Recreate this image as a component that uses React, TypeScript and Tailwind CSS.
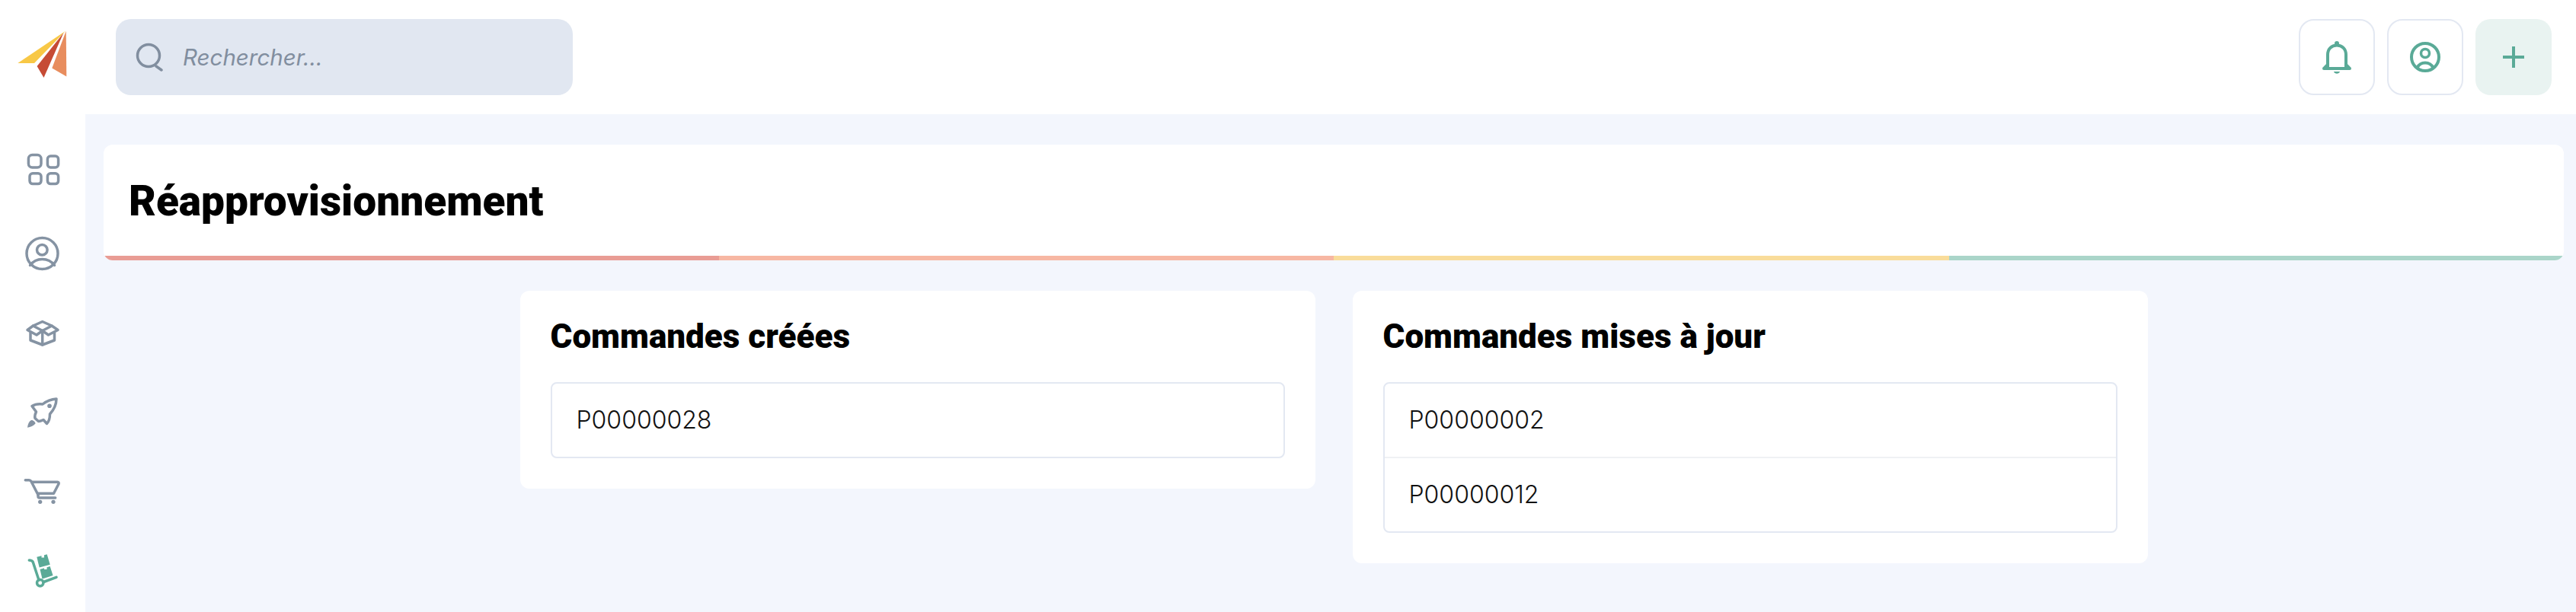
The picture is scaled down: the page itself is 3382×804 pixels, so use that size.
import React from "react";

const SLATE = "#8593a3";
const GREEN = "#5aaa97";

function Logo() {
  return (
    <svg width="112" height="150" viewBox="0 0 112 150" className="block">
      <polygon points="23.3,83 86,40.7 45,83" fill="#f8c846" />
      <polygon points="48.6,87 83.5,43 57.5,102" fill="#c64b35" />
      <polygon points="86.7,40.7 87.3,100.5 68.3,89.5" fill="#e88d5e" />
    </svg>
  );
}

function NavIcon({ children, color = SLATE }: { children: React.ReactNode; color?: string }) {
  return (
    <svg width="56" height="56" viewBox="0 0 56 56" fill="none" stroke={color} strokeWidth="3.5" strokeLinecap="round" strokeLinejoin="round">
      {children}
    </svg>
  );
}

const navIcons = [
  <NavIcon key="grid">
    <rect x="9.4" y="3.4" width="16.6" height="16.6" rx="5" />
    <rect x="34.4" y="5" width="14.2" height="15" rx="4" />
    <rect x="11" y="27.7" width="15" height="13.9" rx="4" />
    <rect x="34.4" y="27.7" width="14.2" height="13.9" rx="4" />
  </NavIcon>,
  <NavIcon key="user">
    <circle cx="27.5" cy="28" r="20.5" />
    <circle cx="27.3" cy="23.3" r="6.8" />
    <path d="M11.5 43.5C16 37.5 22 35.5 27.5 35.5C33 35.5 39 37.5 43.5 43.5" />
  </NavIcon>,
  <NavIcon key="box">
    <path d="M27.7 12.5L40 18L27.7 24.5L15.5 18Z" />
    <path d="M15.5 18L8 23.5L20 30L27.7 24.5L35.5 30L48 23.5L40 18" />
    <path d="M12 27V37L27.7 43L43.5 37V27" />
    <path d="M27.7 24.5V43" />
  </NavIcon>,
  <NavIcon key="rocket">
    <path d="M46 9C39 9.5 33 12 28 16C23 15.5 18 16 14 18.5L19.5 26C18 29 17.5 32 18 34.5L22.5 38.5C25 38.5 27 37.5 29 36.5L33.5 41.5C36 39 37.5 33.5 37.5 29C42 24 46 17 46 9Z" />
    <circle cx="37" cy="18.3" r="2.8" fill={SLATE} stroke="none" />
    <path d="M8 46.7C8.5 42 10 38.5 13 37C15.5 36.5 18.5 39.5 18.5 41.5C16 44.5 12 46 8 46.7Z" fill={SLATE} stroke="none" />
  </NavIcon>,
  <NavIcon key="cart">
    <path d="M5.3 10.7H10C11.5 10.7 12.5 11.5 13 12.5L22 30" />
    <path d="M13.7 13.3H47.5C49 13.3 49.5 14.5 49 15.8L42.5 28.3H22" />
    <path d="M22 29V32C22 33.5 22.8 34 24 34H44.7" />
    <circle cx="24.7" cy="39.3" r="2.6" fill={SLATE} stroke="none" />
    <circle cx="42" cy="39.3" r="2.6" fill={SLATE} stroke="none" />
  </NavIcon>,
  <NavIcon key="dolly" color={GREEN}>
    <polygon points="20.3,6.7 33.7,3.3 37.7,16.7 23.7,20.5" fill={GREEN} stroke="none" />
    <polygon points="24.5,23 37.7,19 41.5,31 27.5,35.5" fill={GREEN} stroke="none" />
    <rect x="26.5" y="4" width="3.5" height="3.5" fill="#ffffff" stroke="none" />
    <rect x="30" y="19.5" width="3.5" height="3.5" fill="#ffffff" stroke="none" />
    <path d="M10.3 11C13 11 14.5 11.5 15.3 13.5L23 37" />
    <path d="M29.5 39.5L46 33.3" />
    <circle cx="24.7" cy="40.7" r="4.2" />
  </NavIcon>,
];

function HeaderButton({ filled, children }: { filled?: boolean; children: React.ReactNode }) {
  return (
    <button
      className={
        filled
          ? "w-[100px] h-[100px] rounded-[20px] bg-[#e9f3f1] flex items-center justify-center"
          : "w-[100px] h-[100px] rounded-[20px] border-2 border-[#e3e8f2] bg-white flex items-center justify-center"
      }
    >
      {children}
    </button>
  );
}

function OrderCard({ title, orders }: { title: string; orders: string[] }) {
  return (
    <div className="w-[1044px] bg-white rounded-[12px] px-[40px] pt-[36px] pb-[40px]">
      <h2 className="font-['Roboto'] font-black text-[44px] leading-[48px] text-black mb-[36px]">{title}</h2>
      <ul className="border-2 border-[#e3e8f2] rounded-[8px]">
        {orders.map((o, i) => (
          <li
            key={o}
            className={
              i > 0
                ? "h-[98px] border-t-2 border-[#eff1f4] pl-[32px] flex items-center font-['Inter'] font-light text-[32px] text-[#111111]"
                : "h-[96px] pl-[32px] flex items-center font-['Inter'] font-light text-[32px] text-[#111111]"
            }
          >
            {o}
          </li>
        ))}
      </ul>
    </div>
  );
}

export default function App() {
  return (
    <div className="flex h-screen bg-white overflow-hidden">
      <aside className="w-[112px] shrink-0 flex flex-col">
        <Logo />
        <nav className="flex flex-col items-center gap-[49px] pt-[50px]">{navIcons}</nav>
      </aside>

      <div className="flex-1 flex flex-col min-w-0">
        <header className="h-[150px] shrink-0 flex items-center justify-between pl-[40px] pr-[32px]">
          <div className="w-[600px] h-[100px] rounded-[20px] bg-[#e1e7f1] flex items-center pl-[26px] gap-[26px]">
            <svg width="36" height="38" viewBox="0 0 36 38" fill="none" stroke="#818e9f" strokeWidth="3.5" strokeLinecap="round">
              <circle cx="17" cy="17" r="14.5" />
              <path d="M27 31L34 36" />
            </svg>
            <span className="font-['Inter'] italic text-[29.5px] text-[#818e9f]">Rechercher...</span>
          </div>
          <div className="flex gap-[16px]">
            <HeaderButton>
              <svg width="60" height="60" viewBox="0 0 60 60" fill="none" stroke={GREEN} strokeWidth="4" strokeLinecap="round">
                <path d="M18 43V27C18 19.5 23 14.5 30 14.5C37 14.5 42 19.5 42 27V43" />
                <path d="M13 45H47" />
                <path d="M14 44L18 40M46 44L42 40" />
                <circle cx="30" cy="12" r="3" fill={GREEN} stroke="none" />
                <path d="M26 49C27 52.5 33 52.5 34 49Z" fill={GREEN} stroke="none" />
              </svg>
            </HeaderButton>
            <HeaderButton>
              <svg width="60" height="60" viewBox="0 0 60 60" fill="none" stroke={GREEN} strokeWidth="4" strokeLinecap="round">
                <circle cx="30" cy="30" r="18" />
                <circle cx="30" cy="25" r="5.5" strokeWidth="3.5" />
                <path d="M19.5 44C22 39 26 37.5 30 37.5C34 37.5 38 39 40.5 44" />
              </svg>
            </HeaderButton>
            <HeaderButton filled>
              <svg width="28" height="28" viewBox="0 0 28 28" stroke={GREEN} strokeWidth="4">
                <path d="M14 0V28M0 14H28" />
              </svg>
            </HeaderButton>
          </div>
        </header>

        <main className="flex-1 bg-[#f3f6fd] pl-[24px] pr-[16px] pt-[40px]">
          <div className="bg-white rounded-[12px] overflow-hidden">
            <div className="h-[146px] pl-[33px] pt-[2px] flex items-center">
              <h1 className="font-['Roboto'] font-black text-[55px] text-black">Réapprovisionnement</h1>
            </div>
            <div className="grid grid-cols-4 h-[6px]">
              <div className="bg-[#e99c94]" />
              <div className="bg-[#f7b7a3]" />
              <div className="bg-[#f9dc9a]" />
              <div className="bg-[#aad5c9]" />
            </div>
          </div>
          <div className="flex items-start justify-center gap-[49px] mt-[40px]">
            <OrderCard title="Commandes créées" orders={["P00000028"]} />
            <OrderCard title="Commandes mises à jour" orders={["P00000002", "P00000012"]} />
          </div>
        </main>
      </div>
    </div>
  );
}
